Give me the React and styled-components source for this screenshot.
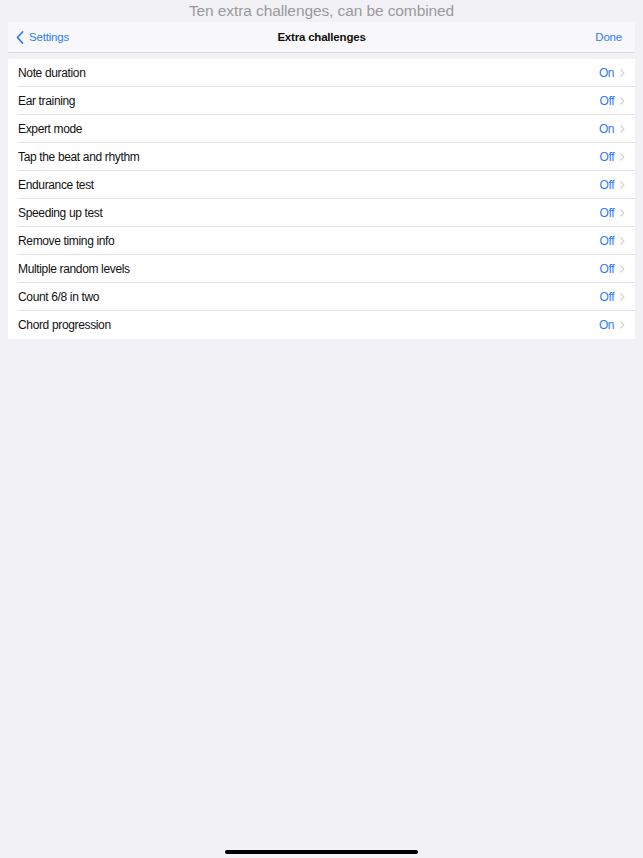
import React from "react"
import styled, { createGlobalStyle } from "styled-components"

const items = [
  ["Note duration", "On"],
  ["Ear training", "Off"],
  ["Expert mode", "On"],
  ["Tap the beat and rhythm", "Off"],
  ["Endurance test", "Off"],
  ["Speeding up test", "Off"],
  ["Remove timing info", "Off"],
  ["Multiple random levels", "Off"],
  ["Count 6/8 in two", "Off"],
  ["Chord progression", "On"],
]

const Chevron = ({ size = 8, color = "#c4c4c8", width = 1.3 }) => (
  <svg width={size * 0.6} height={size} viewBox="0 0 6 10" fill="none">
    <path d="M1 1l4 4-4 4" stroke={color} strokeWidth={width} strokeLinecap="round" strokeLinejoin="round" />
  </svg>
)

export default () => {
  return (
    <>
      <Global />
      <Page>
        <Caption>Ten extra challenges, can be combined</Caption>
        <Sheet>
          <NavBar>
            <BackButton>
              <svg width="8" height="13" viewBox="0 0 8 13" fill="none">
                <path d="M6.5 1L1.5 6.5l5 5.5" stroke="#2f7cf6" strokeWidth="1.8" strokeLinecap="round" strokeLinejoin="round" />
              </svg>
              Settings
            </BackButton>
            <NavTitle>Extra challenges</NavTitle>
            <DoneButton>Done</DoneButton>
          </NavBar>
          <List>
            {items.map(([label, value]) => (
              <Row key={label}>
                <Label>{label}</Label>
                <Value>{value}</Value>
                <Chevron />
              </Row>
            ))}
          </List>
        </Sheet>
        <HomeBar />
      </Page>
    </>
  )
}

const Global = createGlobalStyle`
  html, body {
    margin: 0;
    padding: 0;
    background: #f1f1f6;
  }
  body {
    font-family: "Liberation Sans", Arial, sans-serif;
    -webkit-font-smoothing: antialiased;
  }
`

const Page = styled.div`
  height: 858px;
  display: flex;
  flex-direction: column;
  background: #f1f1f6;
`

const Caption = styled.div`
  height: 22px;
  line-height: 22px;
  text-align: center;
  color: #9a9a9e;
  font-size: 15.5px;
  letter-spacing: -0.1px;
`

const Sheet = styled.div`
  margin: 0 8px;
  flex: 1;
  display: flex;
  flex-direction: column;
`

const NavBar = styled.div`
  height: 30px;
  background: #f8f8fa;
  border-bottom: 1px solid #d8d8dc;
  display: flex;
  align-items: center;
  justify-content: space-between;
  padding: 0 13px 0 8px;
  font-size: 11.5px;
  letter-spacing: -0.2px;
  position: relative;
`

const BackButton = styled.div`
  display: flex;
  align-items: center;
  gap: 5px;
  color: #2f7cf6;
`

const NavTitle = styled.div`
  position: absolute;
  left: 0;
  right: 0;
  text-align: center;
  font-weight: 600;
  color: #111;
  pointer-events: none;
`

const DoneButton = styled.div`
  color: #2f7cf6;
`

const List = styled.div`
  margin-top: 6px;
  background: #fff;
`

const Row = styled.div`
  height: 28px;
  display: flex;
  align-items: center;
  margin-left: 10px;
  padding-right: 10px;
  gap: 6px;
  border-bottom: 1px solid #e4e4e8;
  box-sizing: border-box;
  font-size: 12px;
  letter-spacing: -0.35px;

  &:last-child {
    border-bottom: none;
  }
`

const Label = styled.div`
  flex: 1;
  color: #111;
`

const Value = styled.div`
  color: #2f7cf6;
`

const HomeBar = styled.div`
  align-self: center;
  width: 193px;
  height: 4px;
  border-radius: 2px;
  background: #000;
  margin-bottom: 4px;
  margin-top: 8px;
`
